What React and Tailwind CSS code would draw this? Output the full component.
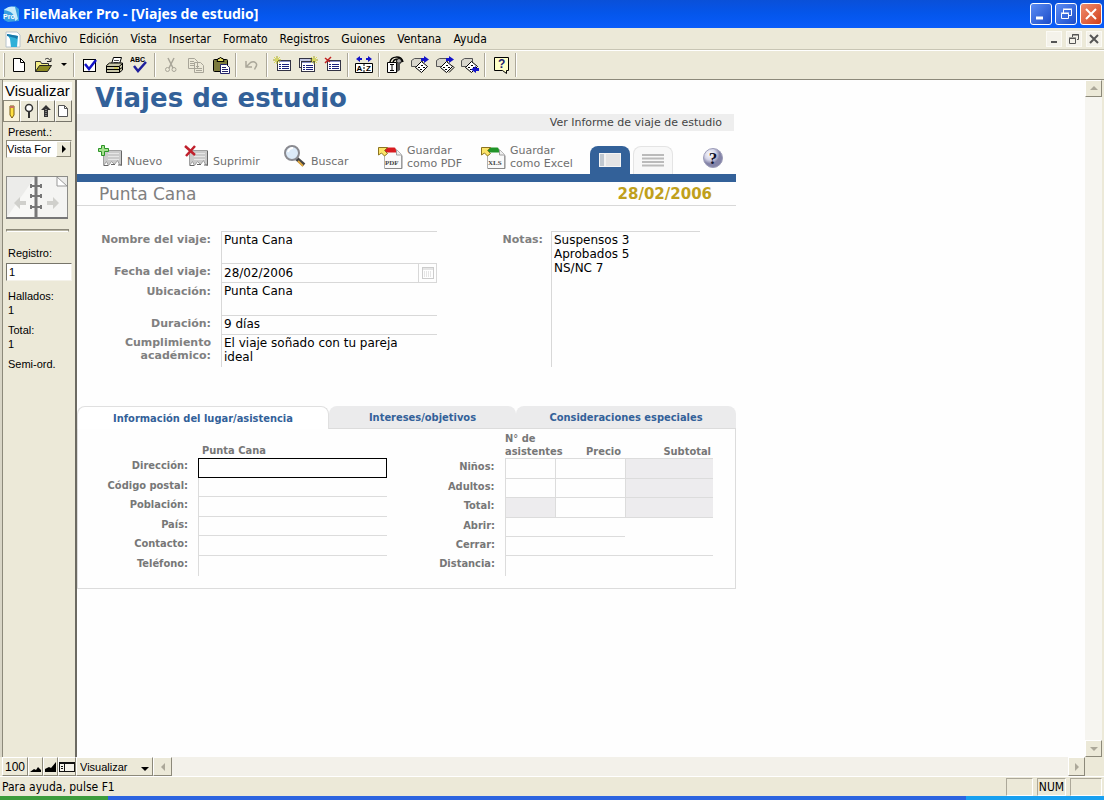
import { useState } from 'react';

const tahoma = "font-['DejaVu_Sans_Condensed','DejaVu_Sans',sans-serif]";
const verdana = "font-['DejaVu_Sans',sans-serif]";
const arial = "font-['Liberation_Sans',sans-serif]";

const menus = ['Archivo', 'Edición', 'Vista', 'Insertar', 'Formato', 'Registros', 'Guiones', 'Ventana', 'Ayuda'];

const K = '#000';
const B = '#1414c8';

function Pix({ children, w = 20 }) {
  return (
    <svg width={w} height="20" viewBox={`0 0 ${w} 20`} fill="none" className="shrink-0">
      {children}
    </svg>
  );
}

const lista = (x, y) => (
  <g>
    <rect x={x + 0.5} y={y + 0.5} width="13" height="10" fill="#fff" stroke="#334" />
    <path d={`M${x + 1} ${y + 1.5}h12`} stroke="#8890c8" />
    <path d={`M${x + 2} ${y + 4.5}h2m1 0h7M${x + 2} ${y + 6.5}h2m1 0h7M${x + 2} ${y + 8.5}h2m1 0h7`} stroke="#18207c" />
  </g>
);

const estrella = (x, y) => (
  <g>
    <path d={`M${x} ${y - 4}v8M${x - 4} ${y}h8`} stroke="#a8a820" />
    <path d={`M${x - 3} ${y - 3}l6 6M${x + 3} ${y - 3}l-6 6`} stroke="#dcdc50" />
  </g>
);

const iconos = {
  nuevo: <Pix><path d="M4.500 3.500h7l4 4v9h-11z" fill="#fff" stroke={K} /><path d="M11.500 3.500v4h4" stroke={K} /></Pix>,
  abrir: (
    <Pix>
      <path d="M1.500 16.500v-10h5l1 2h7v3" fill="#f4ee86" stroke="#333" />
      <path d="M1.500 16.500l4-6h12l-4 6z" fill="#8c8a22" stroke="#222" />
      <path d="M11 4.500c2-2 4-1 5 1M17 3v3.500h-4" stroke="#222" />
    </Pix>
  ),
  validar: <Pix><rect x="3.500" y="4.500" width="12" height="12" fill="#fff" stroke={K} /><path d="M5 9l4 5 7-9" stroke={B} strokeWidth="2.500" /></Pix>,
  imprimir: (
    <Pix>
      <path d="M6.500 9l2-6.500h8l-2 6.500z" fill="#fff" stroke={K} />
      <path d="M9 5.500h5M8.500 7.500h5" stroke="#555" />
      <path d="M1.500 10.500l3-2.500h13v7l-3 2.500h-13z" fill="#c8c6a8" stroke={K} />
      <path d="M2 11.500h12l3-2.500M2 14.500h12M14.500 11.500v6M15 14l3-2" stroke={K} />
      <path d="M9 13h4" stroke="#d8cc20" />
    </Pix>
  ),
  ortografia: (
    <Pix>
      <text x="0" y="7" fontSize="7" fontWeight="700" fill={K} fontFamily="Liberation Sans, sans-serif">ABC</text>
      <path d="M4 11l4 5 8-9" stroke="#20209c" strokeWidth="2.500" />
    </Pix>
  ),
  cortar: (
    <Pix><path d="M7 3l5 10M13 3L8 13" stroke="#a8a598" strokeWidth="1.500" /><circle cx="6.500" cy="14.500" r="2" stroke="#a8a598" /><circle cx="13" cy="14.500" r="2" stroke="#a8a598" /></Pix>
  ),
  copiar: (
    <Pix>
      <path d="M2.500 3.500h6l3 3v7h-9zM8.500 7.500h6l3 3v7h-9z" fill="#ece9d8" stroke="#a8a598" />
      <path d="M4 6.500h4M4 8.500h4M4 10.500h4M10 11.500h3M10 13.500h6M10 15.500h6" stroke="#a8a598" />
    </Pix>
  ),
  pegar: (
    <Pix>
      <rect x="2.500" y="4.500" width="14" height="12" rx="1" fill="#7c7a3c" stroke={K} />
      <path d="M6 6.500h7l-1-3h-1.500l-1-1.500-1 1.500H7z" fill="#e0d860" stroke={K} />
      <path d="M9.500 9.500h6l3 3v6h-9z" fill="#fff" stroke="#24246c" />
      <path d="M11 12.500h4M11 14.500h6M11 16.500h6" stroke="#24246c" />
    </Pix>
  ),
  deshacer: <Pix><path d="M4 6v6h6M4.500 11.500l4-4c4-2 8 1 5 5l-1 2" stroke="#aaa799" strokeWidth="1.500" /></Pix>,
  nuevoReg: <Pix>{lista(4, 5)}{estrella(4, 5)}</Pix>,
  duplicar: <Pix><rect x="1.500" y="3.500" width="12" height="9" fill="#fff" stroke="#334" /><path d="M2 5h11" stroke="#8890c8" />{lista(3, 6)}{estrella(16, 5)}</Pix>,
  borrarReg: <Pix>{lista(4, 5)}<path d="M2 3l5 4M8 2L2 8" stroke="#c02020" strokeWidth="1.500" /></Pix>,
  ordenar: (
    <Pix>
      <path d="M1.500 8.500h17v9h-17z" fill="#fff" stroke={K} />
      <text x="2.500" y="16" fontSize="8" fontWeight="700" fill={K} fontFamily="Liberation Sans, sans-serif">A</text>
      <text x="12" y="16" fontSize="8" fontWeight="700" fill={K} fontFamily="Liberation Sans, sans-serif">Z</text>
      <path d="M10 9v8" stroke={K} strokeDasharray="2 1" />
      <path d="M2 4l4-3v2h2v2H6v2zM18 4l-4-3v2h-2v2h2v2z" fill={B} />
    </Pix>
  ),
  buscar: (
    <Pix>
      <path d="M5 7c1-6 11-7 13 0M8 7c1-3 5-4 7-1" stroke={K} strokeWidth="1.500" />
      <circle cx="14" cy="6" r="2.500" fill="#aaa" stroke={K} />
      <path d="M2.500 7.500h9v10h-9z" fill="#fff" stroke={K} /><path d="M12 8l3-1v8l-3 2z" fill="#555" />
      <path d="M5 9.500h4M7 10v5M5 15.500h4" stroke={K} />
    </Pix>
  ),
  uno: <Pix><Ficha /><path d="M11 3h3V1l5 3.500L14 8V6h-3z" fill={B} /></Pix>,
  dos: <Pix><Ficha /><path d="M14 17.500l5-5-2-2" stroke={K} /><path d="M11 3h3V1l5 3.500L14 8V6h-3z" fill={B} /></Pix>,
  tres: <Pix><Ficha /><path d="M19 13h-3v-2l-5 3.500 5 3.500v-2h3z" fill={B} /></Pix>,
  ayuda: (
    <Pix>
      <path d="M3.500 2.500h14v13h-2v3l-4-3h-8z" fill="#ffffc8" stroke={K} />
      <text x="7" y="13" fontSize="12" fontWeight="700" fill="#202070" fontFamily="Liberation Sans, sans-serif">?</text>
    </Pix>
  ),
};

function Ficha() {
  return (
    <g>
      <path d="M1.500 11.500v-6l3-2h8v8z" fill="#d8d6cc" stroke="#555" />
      <path d="M5.500 12.500l6-6 6 5-6 6z" fill="#fff" stroke={K} />
      <path d="M8 12.500h2m1-2h2m-3 4h2m1-2h2" stroke={K} />
    </g>
  );
}

const grupos = [
  [['validar', 'Validar'], ['imprimir', 'Imprimir'], ['ortografia', 'Ortografía']],
  [['cortar', 'Cortar'], ['copiar', 'Copiar'], ['pegar', 'Pegar']],
  [['deshacer', 'Deshacer']],
  [['nuevoReg', 'Nuevo registro'], ['duplicar', 'Duplicar registro'], ['borrarReg', 'Eliminar registro']],
  [['ordenar', 'Ordenar']],
  [['buscar', 'Buscar'], ['uno', 'Omitir uno'], ['dos', 'Omitir varios'], ['tres', 'Mostrar omitidos']],
  [['ayuda', 'Ayuda']],
];

function BotonIcono({ nombre, titulo }) {
  return (
    <button aria-label={titulo} className="flex w-[25px] h-6 items-center justify-center">{iconos[nombre]}</button>
  );
}

function Separador() {
  return <span className="w-[6px] h-6 flex justify-center"><span className="w-[2px] border-l border-[#aca899] border-r border-r-white" /></span>;
}

function Flecha({ dir, color = '#aca899' }) {
  const d = { up: 'M0 5l4-4 4 4z', down: 'M0 2l4 4 4-4z', left: 'M6 0L2 4l4 4z', right: 'M2 0l4 4-4 4z' }[dir];
  return <svg width="8" height="8" viewBox="0 0 8 8"><path d={d} fill={color} /></svg>;
}

const relieve = 'flex items-center justify-center bg-[#ece9d8] border border-t-white border-l-white border-r-[#8c897a] border-b-[#8c897a]';

function BarraTitulo() {
  const azul = 'w-[22px] h-[22px] rounded-[3px] border border-white flex items-center justify-center bg-linear-to-br from-[#5c8cf4] to-[#1c4cc8]';
  return (
    <header className="h-7 shrink-0 flex items-center pl-[3px] pr-[2px] bg-linear-to-b from-[#0a50d8] via-[#0456ec] to-[#0a5cfa]">
      <svg width="17" height="18" viewBox="0 0 17 18">
        <path d="M1 4l11-3 4 3v12l-11 1-4-2z" fill="#3aa0e0" />
        <path d="M1 5c4-4 8-4 11-3l3 12-3 2C12 9 8 6 1 5z" fill="#c8ecfa" />
        <text x="0" y="14" fontSize="7" fontWeight="700" fill="#fff" fontFamily="Liberation Sans, sans-serif">Pro</text>
      </svg>
      <h1 className="pl-[3px] text-[14px] leading-5 font-bold text-white font-['Noto_Sans',sans-serif] flex-1">FileMaker Pro - [Viajes de estudio]</h1>
      <div className="flex gap-[3px]">
        <button aria-label="Minimizar" className={azul}><svg width="16" height="16"><path d="M3 12h7" stroke="#fff" strokeWidth="3" /></svg></button>
        <button aria-label="Restaurar" className={azul}>
          <svg width="16" height="16" fill="none" stroke="#fff"><path d="M5.500 7V3.500h8v6H11M5 3h9" /><path d="M3.500 7.500h7v5h-7zM3 7h8" /></svg>
        </button>
        <button aria-label="Cerrar" className="w-[22px] h-[22px] rounded-[3px] border border-white flex items-center justify-center bg-linear-to-br from-[#f08c6c] to-[#d03c14]">
          <svg width="16" height="16"><path d="M3 3l10 10M13 3L3 13" stroke="#fff" strokeWidth="2" /></svg>
        </button>
      </div>
    </header>
  );
}

function BarraMenu() {
  const mini = 'w-4 h-4 flex items-center justify-center bg-[#f4f2ea] border border-[#fbfaf5]';
  return (
    <nav className="h-[22px] shrink-0 flex items-center pl-[5px] pr-[2px] bg-[#ece9d8] border-b border-[#c8c5b4]">
      <svg width="16" height="18" viewBox="0 0 16 18">
        <path d="M1 2h11l3 3v12H1z" fill="#fff" stroke="#b8c4cc" />
        <path d="M2 4l11 2-1 11H6L5 9z" fill="#30b0d8" /><path d="M2 4l11 2-1 3C9 7 5 7 2 6z" fill="#1878a8" />
      </svg>
      <ul className={`${tahoma} flex-1 flex text-[12px] leading-4 text-black`}>
        {menus.map(m => <li key={m}><button className="px-[6px]">{m}</button></li>)}
      </ul>
      <div className="flex gap-1">
        <button aria-label="Minimizar documento" className={mini}><svg width="10" height="10"><path d="M2 8h6" stroke="#555" strokeWidth="2" /></svg></button>
        <button aria-label="Restaurar documento" className={mini}>
          <svg width="10" height="10" fill="none" stroke="#555"><path d="M3.500 3V.5h6v5H8M3 1h7M.5 4.500h6v5h-6zM0 4h7" /></svg>
        </button>
        <button aria-label="Cerrar documento" className={mini}><svg width="10" height="10"><path d="M1 1l8 8M9 1L1 9" stroke="#555" strokeWidth="2" /></svg></button>
      </div>
    </nav>
  );
}

function BarraHerramientas() {
  return (
    <div className="h-[30px] shrink-0 flex items-center bg-[#ece9d8] border-t border-t-white border-b border-b-[#8c897a]">
      <span className="ml-[3px] mr-[1px] w-[2px] h-6 border-l border-white border-r border-r-[#aca899]" />
      <BotonIcono nombre="nuevo" titulo="Nuevo" />
      <BotonIcono nombre="abrir" titulo="Abrir" />
      <button aria-label="Abrir recientes" className="w-[15px] flex justify-center">
        <svg width="6" height="4"><path d="M0 0h6L3 3z" fill="#000" /></svg>
      </button>
      {grupos.map((g, i) => (
        <div key={i} className="flex items-center">
          <Separador />
          {g.map(([n, t]) => <BotonIcono key={n} nombre={n} titulo={t} />)}
        </div>
      ))}
      <Separador />
    </div>
  );
}

function PanelEstado() {
  const modo = 'flex-1 h-[22px] flex items-center justify-center bg-[#ece9d8] border border-t-white border-l-white border-r-[#77756a] border-b-[#77756a]';
  return (
    <aside className={`${arial} w-[77px] shrink-0 flex flex-col bg-[#ece9d8] border-l-2 border-[#d8d5c6] border-r-2 border-r-[#6c6a62] text-[11px] leading-[14px] text-black`}>
      <div className="w-[70px] flex-1 pt-[2px] flex flex-col border-l border-[#8c897a]">
        <h2 className="h-[18px] pl-[2px] bg-[#fbfaf6] text-[15px] leading-[18px]">Visualizar</h2>
        <div className="flex">
          <button aria-label="Modo Visualizar" className="flex-1 h-[22px] flex items-center justify-center bg-[#f8f2dc] border border-[#8c897a]">
            <svg width="10" height="16" viewBox="0 0 10 16"><path d="M3 3h4v9l-2 3-2-3z" fill="#ffe040" stroke="#7a5c10" /><path d="M3 3h4v2H3z" fill="#c87060" /></svg>
          </button>
          <button aria-label="Modo Buscar" className={modo}>
            <svg width="12" height="16" viewBox="0 0 12 16" fill="none"><circle cx="6" cy="5" r="3.500" fill="#fff" stroke="#333" strokeWidth="1.500" /><path d="M6 9v6" stroke="#333" strokeWidth="2" /></svg>
          </button>
          <button aria-label="Modo Presentación" className={modo}>
            <svg width="12" height="16" viewBox="0 0 12 16"><path d="M6 2l5 5H8v7H4V7H1z" fill="#333" /><path d="M6 6v8" stroke="#ccc" strokeDasharray="1 1" /></svg>
          </button>
          <button aria-label="Modo Previsualizar" className={modo}>
            <svg width="12" height="14" viewBox="0 0 12 14"><path d="M1.500 1.500h6l3 3v8h-9z" fill="#fff" stroke="#555" /><path d="M7.500 1.500v3h3" fill="none" stroke="#555" /></svg>
          </button>
        </div>
        <div className="pl-[3px] flex flex-col">
          <label htmlFor="present" className="pl-[2px] pt-[3px]">Present.:</label>
          <div className="h-[18px] flex mt-[1px] bg-white border border-t-[#8c897a] border-l-[#8c897a] border-[#ece9d8]">
            <select id="present" className="appearance-none flex-1 min-w-0 text-[11px] leading-4 outline-none bg-transparent">
              <option>Vista For</option>
            </select>
            <span className={`${relieve} w-[15px] shrink-0`}><Flecha dir="right" color="#000" /></span>
          </div>
          <svg width="62" height="43" viewBox="0 0 62 43" className="mt-[18px]">
            <rect x=".5" y=".5" width="61" height="41" fill="#ececea" stroke="#8c8c88" />
            <path d="M1 41L29 1v40z" fill="#f8f8f6" />
            <path d="M31 1h20l10 9v31H31z" fill="#f4f4f2" /><path d="M51 1v9h10z" fill="#fff" stroke="#999" />
            <path d="M30 0v43" stroke="#777" strokeWidth="3" />
            <path d="M0 42h62" stroke="#777" strokeWidth="2" />
            <path d="M25 10h11M25 20h11M25 31h11" stroke="#777" strokeWidth="2" />
            <path d="M25 8v4M35 8v4M25 18v4M35 18v4M25 29v4M35 29v4" stroke="#777" strokeWidth="2" />
            <path d="M8 27l6-6v4h6v4h-6v4zM53 27l-6-6v4h-6v4h6v4z" fill="#d0d0cc" />
          </svg>
          <hr className="mt-[10px] mr-[3px] h-[3px] border border-[#8c897a] border-b-white bg-[#b8b5a4]" />
          <label htmlFor="registro" className="pl-[2px] mt-[14px]">Registro:</label>
          <input id="registro" defaultValue="1" className="mt-[3px] h-[18px] w-full pl-[2px] bg-white border border-t-[#77756a] border-l-[#77756a] border-[#f4f2ea] outline-none" />
          <dl className="pl-[2px] pt-2">
            <dt>Hallados:</dt><dd>1</dd>
            <dt className="pt-[6px]">Total:</dt><dd>1</dd>
            <dt className="pt-[6px]">Semi-ord.</dt>
          </dl>
        </div>
      </div>
    </aside>
  );
}

/* Iconos de la plantilla */
function Tarjeta({ borrar }) {
  return (
    <svg width="26" height="24" viewBox="0 0 26 24">
      <path d="M6.500 6.500h18v15l-2-1-2-4-3 4-3-3-3 4-2-4-3 4z" fill="#cacaca" stroke="#a0a0a0" />
      <path d="M11 9.500h11M11 12.500h11M11 15.500h11" stroke="#e6e6e6" />
      <path d="M24.500 7v14M7 21.500h4M14 20.500h4M21 21h4" stroke="#666" />
      {borrar
        ? <path d="M2 2l10 9M12 2L3 12" stroke="#c0202c" strokeWidth="2.500" />
        : <path d="M4.500 1.500h3v3h4v3h-4v4h-3v-4h-3v-3h3z" fill="#a4e08c" stroke="#2c9428" />}
    </svg>
  );
}

function Lupa() {
  return (
    <svg width="24" height="24" viewBox="0 0 24 24">
      <path d="M13 14l8 7" stroke="#444" strokeWidth="4" /><path d="M15 17l5 5" stroke="#e0a840" strokeWidth="2" />
      <circle cx="9" cy="9" r="7" fill="#dceaf8" stroke="#8a8a90" strokeWidth="2" />
      <path d="M5 8c1-3 3-4 5-4" stroke="#fff" strokeWidth="2" fill="none" />
    </svg>
  );
}

function Exportar({ tipo, color }) {
  return (
    <svg width="26" height="24" viewBox="0 0 26 24">
      <path d="M7.500 3.500h12l5 5v14h-17z" fill="#fafafa" stroke="#b0b0b0" />
      <path d="M8 22.500h17v-13" stroke="#888" fill="none" />
      <path d="M19.500 4v5h5" fill="#eee" stroke="#a0a0a0" />
      <path d="M8 1.500h9c2 0 2 2 2 5H8z" fill={color} />
      <path d="M1.500 1.500h9l-3 3 3 3-3 2.500-3-3-3 2z" fill="#fce468" stroke="#8c7420" />
      <text x="8" y="19" fontSize="7" fontWeight="700" fill="#444" fontFamily="Liberation Serif, serif">{tipo}</text>
    </svg>
  );
}

const rotulo = 'text-right text-[11px] leading-[13px] font-bold text-[#808080]';
const valor = 'block text-[12px] leading-[14px] text-black bg-transparent outline-none resize-none';

function Cabecera() {
  const accion = 'flex items-end gap-1 text-left text-[11px] leading-[13px] text-[#707070]';
  return (
    <>
      <h2 className="h-[34px] pl-[18px] text-[26px] leading-9 font-bold text-[#336199]">Viajes de estudio</h2>
      <div className="h-[17px] mr-[2px] pr-3 bg-[#eee] text-right text-[11px] leading-[18px] text-[#444]">
        <a href="#informe">Ver Informe de viaje de estudio</a>
      </div>
      <div className="h-[43px] flex pl-5 pr-3">
        <div className="w-[86px] pt-[13px]"><button className={accion}><Tarjeta />Nuevo</button></div>
        <div className="w-[100px] pt-[13px]"><button className={accion}><Tarjeta borrar />Suprimir</button></div>
        <div className="w-[94px] pt-[13px]"><button className={accion}><Lupa />Buscar</button></div>
        <div className="w-[103px] pt-[13px]"><button className={accion}><Exportar tipo="PDF" color="#d81c20" /><span>Guardar<br />como PDF</span></button></div>
        <div className="w-[110px] pt-[13px]"><button className={accion}><Exportar tipo="XLS" color="#209428" /><span>Guardar<br />como Excel</span></button></div>
        <div className="flex-1 flex items-end gap-[3px]">
          <button aria-label="Vista formulario" className="w-10 h-7 rounded-t-lg bg-[#336199] flex items-center justify-center">
            <svg width="22" height="14"><rect width="22" height="14" fill="#e4e4e4" /><path d="M1 1h4v12H1z" fill="#c0c8d0" /><path d="M6 1v12" stroke="#fff" /><path d="M.5 .5h21v13H.5z" fill="none" stroke="#f4f4f4" /></svg>
          </button>
          <button aria-label="Vista lista" className="w-10 h-7 rounded-t-lg bg-[#f8f8f8] border border-b-0 border-[#e4e4e4] flex items-center justify-center">
            <svg width="22" height="13"><path d="M0 1h22M0 4.500h22M0 8h22M0 11.500h22" stroke="#bababa" strokeWidth="2" /></svg>
          </button>
        </div>
        <button aria-label="Ayuda de la plantilla" className="self-center pt-[10px]">
          <svg width="22" height="22" viewBox="0 0 22 22">
            <defs><radialGradient id="bola" cx=".35" cy=".3"><stop offset="0" stopColor="#fff" /><stop offset=".6" stopColor="#d4d4e8" /><stop offset="1" stopColor="#8484a8" /></radialGradient></defs>
            <circle cx="11" cy="11" r="9.500" fill="url(#bola)" stroke="#9c9cb8" />
            <text x="11" y="17" textAnchor="middle" fontSize="17" fontWeight="700" fill="#101028" fontFamily="Liberation Serif, serif">?</text>
          </svg>
        </button>
      </div>
      <div className="h-2 bg-[#336199]" />
      <div className="h-6 flex items-center justify-between pl-[22px] pr-6 border-b border-[#d8d8d8] text-[#808080] text-[17px] leading-6">
        <span>Punta Cana</span>
        <span className="text-[15px] font-bold text-[#c0a01c]">28/02/2006</span>
      </div>
    </>
  );
}

function FichaViaje() {
  const celda = 'border-l border-[#d8d8d8] pl-[2px] pt-[1px]';
  return (
    <div className="flex pt-[25px] pr-9 h-[200px] items-start">
      <div className="w-[360px] grid grid-cols-[134px_216px] gap-x-[10px] grid-rows-[32px_20px_32px_19px_33px]">
        <label htmlFor="nombre" className={`${rotulo} pt-[2px]`}>Nombre del viaje:</label>
        <div className={`${celda} border-t`}><textarea id="nombre" rows="2" className={`${valor} w-full`} defaultValue="Punta Cana" /></div>
        <label htmlFor="fecha" className={`${rotulo} pt-[2px]`}>Fecha del viaje:</label>
        <div className="border border-[#d8d8d8] pl-[2px] flex">
          <input id="fecha" defaultValue="28/02/2006" className={`${valor} flex-1 min-w-0`} />
          <button aria-label="Calendario" className="w-[18px] border-l border-[#d8d8d8] flex items-center justify-center">
            <svg width="12" height="12" fill="none" stroke="#ccc"><rect x=".5" y=".5" width="11" height="11" /><path d="M1 2h10" /><path d="M2 5h8M2 7h8M2 9h8" strokeDasharray="1 1" /></svg>
          </button>
        </div>
        <label htmlFor="ubicacion" className={`${rotulo} pt-[2px]`}>Ubicación:</label>
        <div className={celda}><textarea id="ubicacion" rows="2" className={`${valor} w-full`} defaultValue="Punta Cana" /></div>
        <label htmlFor="duracion" className={`${rotulo} pt-[2px]`}>Duración:</label>
        <div className={`${celda} border-t`}><input id="duracion" className={`${valor} w-full`} defaultValue="9 días" /></div>
        <label htmlFor="cumplimiento" className={`${rotulo} pt-[2px]`}>Cumplimiento<br />académico:</label>
        <div className={`${celda} border-t`}><textarea id="cumplimiento" rows="2" className={`${valor} w-full pr-4`} defaultValue="El viaje soñado con tu pareja ideal" /></div>
      </div>
      <label htmlFor="notas" className={`${rotulo} flex-1 pt-[2px] pr-2`}>Notas:</label>
      <div className={`${celda} border-t w-[149px] h-[136px]`}>
        <textarea id="notas" rows="9" className={`${valor} w-full`} defaultValue={'Suspensos 3\nAprobados 5\nNS/NC 7'} />
      </div>
    </div>
  );
}

const direccion = [
  ['Dirección:', 'h-5 border border-black outline-none'],
  ['Código postal:', 'h-[19px] border-l border-b border-[#dcdcdc]'],
  ['Población:', 'h-5 border-l border-b border-[#dcdcdc]'],
  ['País:', 'h-[19px] border-l border-b border-[#dcdcdc]'],
  ['Contacto:', 'h-5 border-l border-b border-[#dcdcdc]'],
  ['Teléfono:', 'h-5 border-l border-[#dcdcdc]'],
];

const asistentes = [
  ['Niños:', false, 'h-5'],
  ['Adultos:', false, 'h-[19px]'],
  ['Total:', true, 'h-5'],
];

const extras = [
  ['Abrir:', 'w-[120px] h-[19px] border-b'],
  ['Cerrar:', 'w-[208px] h-[19px] border-b'],
  ['Distancia:', 'w-[208px] h-5'],
];

function Pestanas() {
  const [activa, setActiva] = useState(0);
  const tabs = [['Información del lugar/asistencia', 'w-[252px]'], ['Intereses/objetivos', 'w-[187px]'], ['Consideraciones especiales', 'flex-1']];
  const rot = 'text-right text-[11px] leading-4 font-bold text-[#777]';
  return (
    <section className={tahoma}>
      <div role="tablist" className="flex h-[23px]">
        {tabs.map(([t, w], i) => (
          <button
            key={t}
            role="tab"
            aria-selected={i === activa}
            onClick={() => setActiva(i)}
            className={`${w} rounded-t-lg pt-[1px] text-[11px] leading-[22px] font-bold text-[#336199] ${
              i === activa ? 'bg-white border-t border-x border-[#e0e0e0]' : 'bg-[#ebebec] border-b border-[#dcdcdc]'
            }`}
          >
            {t}
          </button>
        ))}
      </div>
      <div className="h-[160px] flex justify-between pr-[22px] border border-t-0 border-[#dcdcdc]">
        <div className="w-[309px] pt-[14px]">
          <p className="pl-[124px] text-[11px] leading-[15px] font-bold text-[#777]">Punta Cana</p>
          {direccion.map(([t, c]) => (
            <div key={t} className="flex gap-[10px]">
              <label htmlFor={t} className={`${rot} w-[110px]`}>{t}</label>
              <input id={t} className={`${c} flex-1 min-w-0 px-1 text-[12px] bg-transparent`} />
            </div>
          ))}
        </div>
        <div className="w-[285px] pt-[3px]">
          <table className="w-full table-fixed border-collapse">
            <thead>
              <tr className="h-[26px] align-bottom text-[11px] leading-[13px] font-bold text-[#777]">
                <td className="w-[77px]" />
                <th scope="col" className="w-[50px] p-0 text-left whitespace-nowrap">N° de<br />asistentes</th>
                <th scope="col" className="w-[70px] p-0 pr-1 text-right">Precio</th>
                <th scope="col" className="w-[88px] p-0 pr-[2px] text-right">Subtotal</th>
              </tr>
            </thead>
            <tbody>
              {asistentes.map(([t, gris, h]) => (
                <tr key={t} className={h}>
                  <th scope="row" className={`${rot} p-0 pr-[10px] align-top`}>{t}</th>
                  <td className={`p-0 border border-[#dcdcdc] ${gris ? 'bg-[#edecee]' : ''}`}><input aria-label={`${t} asistentes`} className="block w-full h-4" /></td>
                  <td className="p-0 border border-[#dcdcdc]"><input aria-label={`${t} precio`} className="block w-full h-4" /></td>
                  <td className="p-0 border border-[#dcdcdc] border-r-0 bg-[#edecee]" />
                </tr>
              ))}
            </tbody>
          </table>
          {extras.map(([t, c]) => (
            <div key={t} className="flex">
              <label htmlFor={t} className={`${rot} w-[67px] mr-[10px]`}>{t}</label>
              <input id={t} className={`${c} border-l border-[#dcdcdc]`} />
            </div>
          ))}
        </div>
      </div>
    </section>
  );
}

function BarraInferior() {
  return (
    <div className={`${arial} h-[19px] shrink-0 flex bg-[#ece9d8] pl-[2px] pr-[2px] text-[12px] leading-4 text-black`}>
      <button className={`${relieve} w-[26px]`}>100</button>
      <button aria-label="Reducir" className={`${relieve} w-[15px]`}><svg width="13" height="12"><path d="M1 11l4-3 2 1 2-3 3 3v2z" fill="#000" /></svg></button>
      <button aria-label="Ampliar" className={`${relieve} w-[15px]`}><svg width="13" height="12"><path d="M1 11V8l4-2 2 1 5-6v10z" fill="#000" /></svg></button>
      <button aria-label="Área de estado" className={`${relieve} w-[18px]`}>
        <svg width="16" height="12" fill="none" stroke="#111"><rect x=".5" y="1.500" width="15" height="9" fill="#f4f2ea" /><path d="M0 2h16" strokeWidth="2" /><path d="M5.500 2v9M2 5.500h2M2 7.500h2" /></svg>
      </button>
      <div className={`${relieve} w-[77px]`}>
        <select aria-label="Modo" className="appearance-none flex-1 min-w-0 pl-[3px] text-[11px] bg-transparent outline-none"><option>Visualizar</option></select>
        <span className="w-[14px] flex justify-center pt-1"><Flecha dir="down" color="#000" /></span>
      </div>
      <button aria-label="Desplazar a la izquierda" className={`${relieve} w-[19px]`}><Flecha dir="left" /></button>
      <div className="flex-1 bg-[#f3f1ea]" />
      <button aria-label="Desplazar a la derecha" className={`${relieve} w-[17px]`}><Flecha dir="right" /></button>
      <div className="w-[17px]" />
    </div>
  );
}

export default function App() {
  const casilla = 'h-[18px] border border-t-[#aca899] border-l-[#aca899] border-white';
  return (
    <div className={`${verdana} h-screen flex flex-col bg-[#ece9d8] overflow-hidden`}>
      <BarraTitulo />
      <BarraMenu />
      <BarraHerramientas />
      <div className="flex-1 min-h-0 flex pr-[2px]">
        <PanelEstado />
        <main className="flex-1 min-w-0 bg-[#fefefe] overflow-hidden">
          <div className="max-w-[659px]">
            <Cabecera />
            <FichaViaje />
            <Pestanas />
          </div>
        </main>
        <div className="w-[17px] shrink-0 flex flex-col justify-between bg-[#f6f5f0]">
          <button aria-label="Subir" className={`${relieve} h-[17px]`}><Flecha dir="up" /></button>
          <button aria-label="Bajar" className={`${relieve} h-[17px]`}><Flecha dir="down" /></button>
        </div>
      </div>
      <BarraInferior />
      <footer className={`${tahoma} h-5 shrink-0 flex items-center gap-1 pl-[2px] pr-[2px] border-t border-white text-[12px] leading-4 text-black`}>
        <span className="flex-1">Para ayuda, pulse F1</span>
        <span className={`${casilla} w-[27px]`} />
        <span className={`${casilla} w-[29px] text-center`}>NUM</span>
        <span className={`${casilla} w-8`} />
      </footer>
      <div className="h-1 shrink-0 flex">
        <div className="w-[108px] bg-[#3c9c3c]" />
        <div className="flex-1 bg-[#2c64e0]" />
        <div className="w-[138px] bg-[#18a0f0]" />
      </div>
    </div>
  );
}
